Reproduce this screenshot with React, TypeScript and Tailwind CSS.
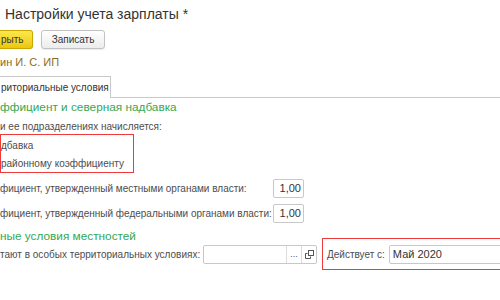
export default function App() {
  return (
    <div className="w-[500px] h-[300px] overflow-hidden bg-white text-[#4d4d4d] text-[10px] whitespace-nowrap font-['Liberation_Sans',Arial,sans-serif]">
      <div className="flex flex-col">
        <div className="h-[28px] flex items-center pl-[5px] text-[14px] text-[#333]">Настройки учета зарплаты *</div>

        <div className="mt-[2px] h-[19px] flex items-stretch gap-[8px]">
          <div className="w-[33px] flex items-center pl-[1px] rounded-r-[3px] border border-l-0 border-[#caa700] bg-gradient-to-b from-[#fbe84a] to-[#ecc700] text-[#333]">
            рыть
          </div>
          <div className="w-[64px] flex items-center justify-center rounded-[3px] border border-[#c2c2c2] bg-gradient-to-b from-white to-[#ececec] text-[#333] shadow-[0_1px_1px_rgba(0,0,0,0.08)]">
            Записать
          </div>
        </div>

        <div className="mt-[3px] h-[20px] flex items-center text-[11px] text-[#8c6d23]">ин И. С. ИП</div>

        <div className="mt-[4px] h-[22px] flex items-end border-b border-[#c9c9c9]">
          <div className="h-[22px] w-[111px] flex items-center pl-[1px] border border-l-0 border-b-0 border-[#c9c9c9] bg-white -mb-px text-[#333]">
            риториальные условия
          </div>
        </div>

        <div className="h-[20px] flex items-center text-[11.8px] text-[#33a852]">ффициент и северная надбавка</div>

        <div className="h-[16px] flex items-center">и ее подразделениях начисляется:</div>

        <div className="w-[134px] border border-[#f03a3a] flex flex-col pt-px">
          <div className="h-[18px] flex items-center">дбавка</div>
          <div className="h-[18px] flex items-center">районному коэффициенту</div>
        </div>

        <div className="mt-[6px] h-[19px] flex items-center">
          <div className="w-[273px]">фициент, утвержденный местными органами власти:</div>
          <div className="w-[31px] h-[19px] flex items-center justify-end pr-[2px] border border-[#c8c8c8] rounded-[2px] text-[11px] text-[#333]">1,00</div>
        </div>

        <div className="mt-[6px] h-[19px] flex items-center">
          <div className="w-[273px]">фициент, утвержденный федеральными органами власти:</div>
          <div className="w-[31px] h-[19px] flex items-center justify-end pr-[2px] border border-[#c8c8c8] rounded-[2px] text-[11px] text-[#333]">1,00</div>
        </div>

        <div className="mt-[4px] h-[20px] flex items-center text-[11.8px] text-[#33a852]">ные условия местностей</div>

        <div className="-mt-[9px] h-[32px] flex items-center">
          <div className="w-[203px] shrink-0">тают в особых территориальных условиях:</div>
          <div className="w-[114px] shrink-0 h-[19px] flex border border-[#c8c8c8] rounded-[2px]">
            <div className="flex-1 border-r border-[#dcdcdc]" />
            <div className="w-[15px] flex items-end justify-center pb-[4px] border-r border-[#dcdcdc] text-[9px] leading-none text-[#555]">...</div>
            <div className="w-[14px] flex items-center justify-center">
              <svg width="9" height="9" viewBox="0 0 9 9" fill="none" stroke="#555" strokeWidth="1">
                <rect x="3.5" y="0.5" width="5" height="5" />
                <path d="M2.5 3.5H0.5V8.5H5.5V6.5" />
              </svg>
            </div>
          </div>
          <div className="ml-[5px] shrink-0 h-[32px] w-[200px] flex items-center gap-[4px] pl-[4px] border border-[#f03a3a]">
            <span>Действует с:</span>
            <div className="flex-1 h-[19px] flex items-center pl-[3px] border border-[#c8c8c8] rounded-l-[2px] text-[11px] text-[#333]">Май 2020</div>
          </div>
        </div>
      </div>
    </div>
  )
}
